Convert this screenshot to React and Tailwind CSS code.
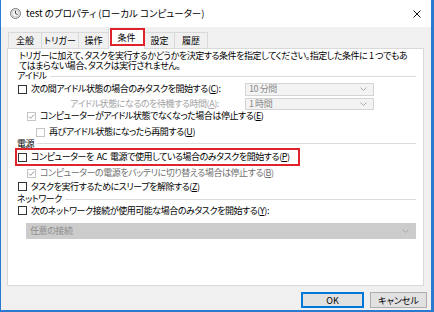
import React from 'react';

const font = "font-['Noto_Sans_CJK_JP','Noto_Sans',sans-serif] [font-feature-settings:'palt']";

function Box({ checked, disabled }) {
  return (
    <div
      className={`w-[9px] h-[9px] shrink-0 border bg-white flex items-center justify-center ${
        disabled ? 'border-[#c4c4c4]' : 'border-[#333333]'
      }`}
    >
      {checked && (
        <svg width="7" height="7" viewBox="0 0 7 7">
          <polyline points="0.8,3.6 2.6,5.4 6.2,1.4" fill="none" stroke="#9c9c9c" strokeWidth="1" />
        </svg>
      )}
    </div>
  );
}

function Chevron() {
  return (
    <svg width="7" height="4" viewBox="0 0 7 4" className="shrink-0">
      <polyline points="0.5,0.5 3.5,3.5 6.5,0.5" fill="none" stroke="#a8a8a8" strokeWidth="1" />
    </svg>
  );
}

function Combo({ label, className }) {
  return (
    <div className={`flex items-center justify-between border border-[#d4d4d4] bg-[#f3f3f3] pl-[3px] pr-[6px] text-[#8a8a8a] ${className}`}>
      <span>{label}</span>
      <Chevron />
    </div>
  );
}

function Group({ title, className }) {
  return (
    <div className={`flex items-center ${className}`}>
      <span>{title}</span>
      <div className="flex-1 h-px bg-[#dcdcdc] ml-[3px]" />
    </div>
  );
}

const tabs = ['全般', 'トリガー', '操作', '条件', '設定', '履歴'];
const tabWidths = ['w-[34px]', 'w-[38px]', 'w-[31px]', 'w-[37px]', 'w-[31px]', 'w-[34px]'];

export default function App() {
  return (
    <div className={`w-[434px] h-[312px] bg-[#f0f0f0] border-l border-r-[3px] border-b-2 border-[#2a7bcf] flex flex-col text-[9px] text-black whitespace-nowrap tracking-[-0.45px] ${font}`}>
      {/* title bar */}
      <div className="h-[27px] bg-white flex items-center pl-[9px] pr-[10px]">
        <svg width="11" height="11" viewBox="0 0 11 11" className="shrink-0">
          <circle cx="5.5" cy="5.5" r="5" fill="#f4f4f4" stroke="#7d7d7d" strokeWidth="1" />
          <circle cx="5.5" cy="5.5" r="3.6" fill="none" stroke="#b9b9b9" strokeWidth="0.8" />
          <polyline points="5.5,2.8 5.5,5.5 7.6,6.6" fill="none" stroke="#404040" strokeWidth="1" />
        </svg>
        <span className="ml-[5px] text-[9.5px] tracking-normal">test のプロパティ (ローカル コンピューター)</span>
        <div className="flex-1" />
        <svg width="8" height="8" viewBox="0 0 8 8">
          <line x1="0.5" y1="0.5" x2="7.5" y2="7.5" stroke="#111" strokeWidth="1" />
          <line x1="7.5" y1="0.5" x2="0.5" y2="7.5" stroke="#111" strokeWidth="1" />
        </svg>
      </div>

      {/* tabs */}
      <div className="h-[21px] flex items-end pl-[8px] relative z-10 tracking-normal">
        {tabs.map((t, i) =>
          t === '条件' ? (
            <div key={t} className={`relative -ml-px h-[20px] mb-[-1px] bg-white border border-b-0 border-[#d9d9d9] flex items-center justify-center ${tabWidths[i]}`}>
              <span className="-mt-[3px]">{t}</span>
              <div className="absolute left-[1px] top-[-2px] w-[35px] h-[18px] border-2 border-[#e0222b]" />
            </div>
          ) : (
            <div key={t} className={`-ml-px h-[16px] bg-[#f0f0f0] border border-b-0 border-[#d9d9d9] flex items-center justify-center ${tabWidths[i]}`}>
              {t}
            </div>
          )
        )}
      </div>

      {/* panel */}
      <div className="ml-[6px] w-[417px] h-[238px] bg-white border border-[#d9d9d9] pl-[9px] pr-[7px] pt-[2px] flex flex-col">
        <div className="pl-[2px] leading-[10px]">
          <div>トリガーに加えて、タスクを実行するかどうかを決定する条件を指定してください。指定した条件に 1 つでもあ</div>
          <div>てはまらない場合、タスクは実行されません。</div>
        </div>

        <Group title="アイドル" className="h-[10px]" />

        <div className="h-[16px] flex items-center">
          <div className="w-[228px] flex items-center pl-[1px]">
            <Box />
            <span className="ml-[4px]">次の間アイドル状態の場合のみタスクを開始する(<u>C</u>):</span>
          </div>
          <Combo label="10 分間" className="w-[129px] h-[13px]" />
        </div>

        <div className="h-[13px] flex items-center">
          <div className="w-[228px] pl-[53px] text-[#a3a3a3]">アイドル状態になるのを待機する時間(<u>A</u>):</div>
          <Combo label="1 時間" className="w-[129px] h-[12px]" />
        </div>

        <div className="h-[12px] flex items-center pl-[10px]">
          <Box checked disabled />
          <span className="ml-[4px]">コンピューターがアイドル状態でなくなった場合は停止する(<u>E</u>)</span>
        </div>

        <div className="mt-[3px] h-[14px] flex items-center pl-[19px]">
          <Box disabled />
          <span className="ml-[4px]">再びアイドル状態になったら再開する(<u>U</u>)</span>
        </div>

        <Group title="電源" className="h-[9px]" />

        <div className="-ml-[2px] w-[285px] h-[18px] border-2 border-[#e0222b] flex items-center pl-[1px]">
          <Box />
          <span className="ml-[4px]">
            コンピューターを<span className="mx-[3px]">AC</span>電源で使用している場合のみタスクを開始する(<u>P</u>)
          </span>
        </div>

        <div className="h-[14px] flex items-center pl-[10px]">
          <Box checked disabled />
          <span className="ml-[4px] text-[#6f6f6f]">コンピューターの電源をバッテリに切り替える場合は停止する(<u>B</u>)</span>
        </div>

        <div className="h-[13px] flex items-center pl-[1px]">
          <Box />
          <span className="ml-[4px]">タスクを実行するためにスリープを解除する(<u>Z</u>)</span>
        </div>

        <Group title="ネットワーク" className="h-[12px]" />

        <div className="h-[11px] flex items-center pl-[1px]">
          <Box />
          <span className="ml-[4px]">次のネットワーク接続が使用可能な場合のみタスクを開始する(<u>Y</u>):</span>
        </div>

        <div className="mt-[7px] ml-[9px] h-[16px] bg-[#cccccc] flex items-center justify-between pl-[4px] pr-[7px] text-[#8e8e8e]">
          <span>任意の接続</span>
          <Chevron />
        </div>
      </div>

      {/* buttons */}
      <div className="mt-[6px] flex justify-end gap-[6px] pr-[4px] tracking-normal">
        <button className="w-[63px] h-[16px] bg-[#e1e1e1] border-2 border-[#0078d7] flex items-center justify-center leading-none">OK</button>
        <button className="w-[57px] h-[16px] bg-[#e1e1e1] border border-[#adadad] flex items-center justify-center leading-none">キャンセル</button>
      </div>
    </div>
  );
}
